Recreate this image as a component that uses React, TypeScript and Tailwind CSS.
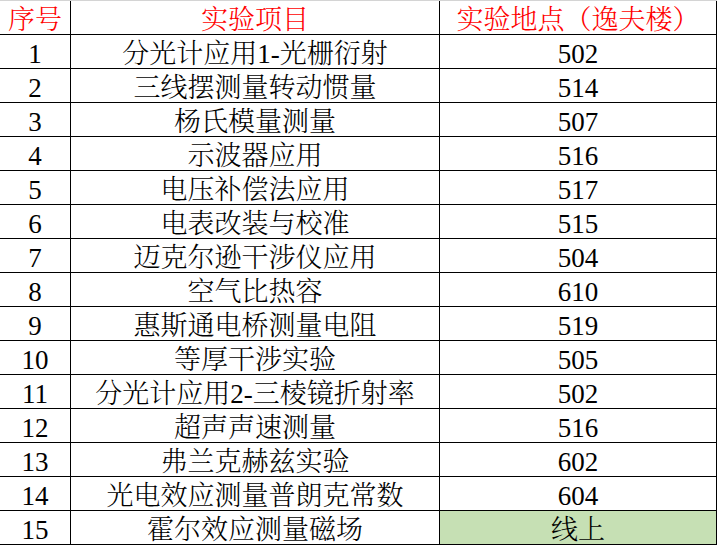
import React from "react";

const rows: [string, string, string][] = [
  ["1", "分光计应用1-光栅衍射", "502"],
  ["2", "三线摆测量转动惯量", "514"],
  ["3", "杨氏模量测量", "507"],
  ["4", "示波器应用", "516"],
  ["5", "电压补偿法应用", "517"],
  ["6", "电表改装与校准", "515"],
  ["7", "迈克尔逊干涉仪应用", "504"],
  ["8", "空气比热容", "610"],
  ["9", "惠斯通电桥测量电阻", "519"],
  ["10", "等厚干涉实验", "505"],
  ["11", "分光计应用2-三棱镜折射率", "502"],
  ["12", "超声声速测量", "516"],
  ["13", "弗兰克赫兹实验", "602"],
  ["14", "光电效应测量普朗克常数", "604"],
  ["15", "霍尔效应测量磁场", "线上"],
];

const font = {
  fontFamily:
    '"Liberation Serif", "Noto Serif CJK SC", "Noto Sans CJK SC", serif',
};

const cell =
  "h-[34px] border-r border-b border-black flex items-center justify-center pt-[6px] font-light whitespace-nowrap";

export default function App() {
  return (
    <div
      className="w-[718px] h-[545px] bg-white overflow-hidden text-[27px] leading-none text-black"
      style={font}
    >
      <div className="border-t border-[#d4d4d4] grid grid-cols-[71px_369px_277px] w-[717px]">
        <div className={cell + " text-[#ff0000]"}>序号</div>
        <div className={cell + " text-[#ff0000]"}>实验项目</div>
        <div className={cell + " text-[#ff0000]"}>实验地点（逸夫楼）</div>
        {rows.map(([n, name, loc]) => (
          <React.Fragment key={n}>
            <div className={cell}>{n}</div>
            <div className={cell}>{name}</div>
            <div className={loc === "线上" ? cell + " bg-[#c6e0b4]" : cell}>
              {loc}
            </div>
          </React.Fragment>
        ))}
      </div>
    </div>
  );
}
